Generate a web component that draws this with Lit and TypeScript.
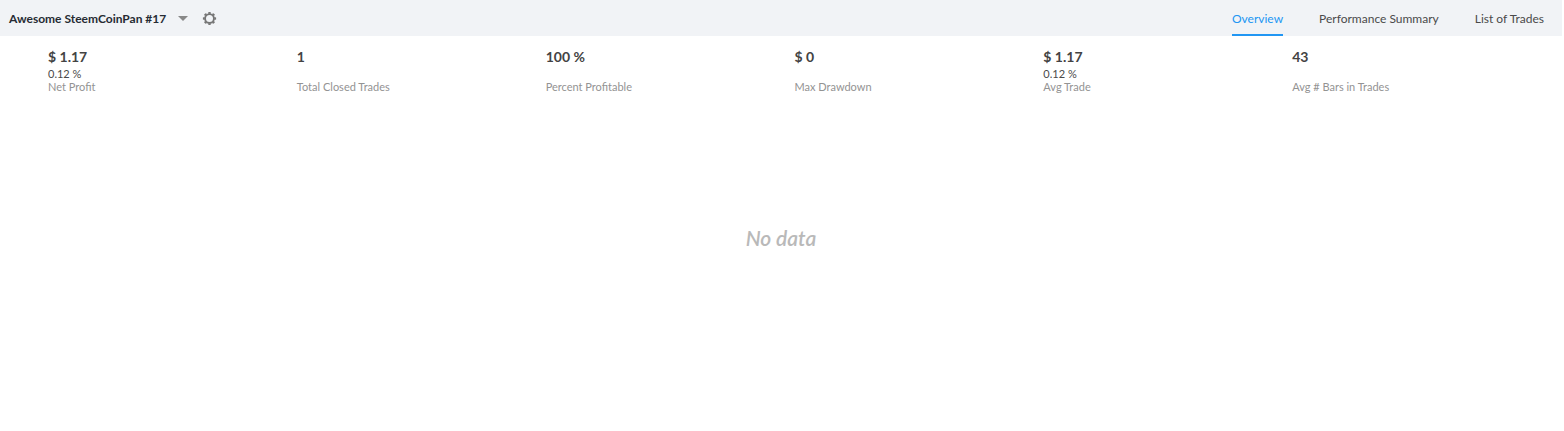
import { LitElement, html, css, svg, nothing } from "lit";
import { customElement, state } from "lit/decorators.js";

interface Metric {
  value: string;
  percent?: string;
  label: string;
}

const METRICS: Metric[] = [
  { value: "$ 1.17", percent: "0.12 %", label: "Net Profit" },
  { value: "1", label: "Total Closed Trades" },
  { value: "100 %", label: "Percent Profitable" },
  { value: "$ 0", label: "Max Drawdown" },
  { value: "$ 1.17", percent: "0.12 %", label: "Avg Trade" },
  { value: "43", label: "Avg # Bars in Trades" },
];

const TABS = ["Overview", "Performance Summary", "List of Trades"];

const TEETH = [0, 45, 90, 135, 180, 225, 270, 315];

@customElement("app-root")
export class AppRoot extends LitElement {
  static styles = css`
    :host {
      display: flex;
      flex-direction: column;
      min-height: 100vh;
      padding-right: 2px;
      box-sizing: border-box;
      background: #fff;
      color: #4a4a4a;
      font-family: "Trebuchet MS", Lato, sans-serif;
      font-size: 12px;
    }
    button {
      margin: 0;
      padding: 0;
      border: 0;
      background: none;
      color: inherit;
      font: inherit;
      cursor: pointer;
    }
    .header {
      display: flex;
      justify-content: space-between;
      height: 36px;
      padding: 0 18px 0 9px;
      background: #f1f3f6;
    }
    .strategy,
    .tabs {
      display: flex;
      align-items: center;
    }
    .strategy {
      gap: 14px;
    }
    .title {
      display: flex;
      align-items: center;
      gap: 12px;
      color: #262b33;
      font-weight: 700;
      white-space: nowrap;
    }
    .icon {
      display: block;
    }
    .tabs {
      gap: 36px;
      align-items: stretch;
    }
    .tab {
      border-top: 2px solid transparent;
      border-bottom: 2px solid transparent;
      white-space: nowrap;
    }
    .tab.active {
      border-bottom-color: #2196f3;
      color: #2196f3;
    }
    .metrics {
      display: grid;
      grid-template-columns: repeat(6, 1fr);
      margin: 0;
      padding: 11px 21px 0 48px;
    }
    .metric {
      display: grid;
      grid-template-rows: 20px 13px 13px;
      font-size: 11px;
      line-height: 13px;
    }
    .value,
    .percent,
    .label {
      margin: 0;
    }
    .value {
      grid-row: 1;
      font-size: 14px;
      line-height: 20px;
      font-weight: 700;
      color: #434343;
    }
    .percent {
      grid-row: 2;
    }
    .label {
      grid-row: 3;
      color: #939393;
    }
    .empty {
      flex: 1;
      display: flex;
      align-items: center;
      justify-content: center;
      padding-bottom: 50px;
      color: #b9b9b9;
      font-size: 21px;
      font-style: italic;
      font-weight: 600;
    }
  `;

  @state() private active = TABS[0];

  render() {
    return html`
      <header class="header">
        <div class="strategy">
          <button class="title" aria-haspopup="menu">
            <span>Awesome SteemCoinPan #17</span>
            <svg class="icon" width="10" height="5" viewBox="0 0 10 5" aria-hidden="true">
              <path d="M0 0h10L5 5z" fill="#888" />
            </svg>
          </button>
          <button aria-label="Strategy settings">
            <svg class="icon" width="15" height="15" viewBox="-7.5 -7.5 15 15" aria-hidden="true">
              <circle r="4.4" fill="none" stroke="#757575" stroke-width="1.8" />
              ${TEETH.map(
                (a) => svg`<path d="M-1.5 -4.8L-1 -6.6H1L1.5 -4.8z" fill="#757575" transform="rotate(${a})" />`,
              )}
            </svg>
          </button>
        </div>
        <nav class="tabs" aria-label="Report">
          ${TABS.map(
            (t) => html`<button
              class="tab ${t === this.active ? "active" : ""}"
              aria-pressed=${t === this.active}
              @click=${() => (this.active = t)}
            >${t}</button>`,
          )}
        </nav>
      </header>
      <dl class="metrics">
        ${METRICS.map(
          (m) => html`<div class="metric">
            <dt class="label">${m.label}</dt>
            <dd class="value">${m.value}</dd>
            ${m.percent ? html`<dd class="percent">${m.percent}</dd>` : nothing}
          </div>`,
        )}
      </dl>
      <main class="empty">No data</main>
    `;
  }
}
